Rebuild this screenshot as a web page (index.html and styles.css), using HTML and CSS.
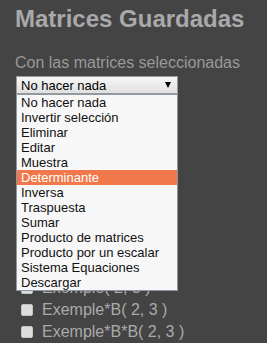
FILE: index.html
```html
<!DOCTYPE html>
<html>
<head>
<meta charset="utf-8">
<link rel="stylesheet" href="styles.css">
</head>
<body>
<h1 class="title">Matrices Guardadas</h1>
<p class="subtitle">Con las matrices seleccionadas</p>
<div class="select-wrap">
  <div class="select">
    <span>No hacer nada</span>
    <span class="arrow"></span>
  </div>
  <ul class="dropdown">
    <li>No hacer nada</li>
    <li>Invertir selección</li>
    <li>Eliminar</li>
    <li>Editar</li>
    <li>Muestra</li>
    <li class="active">Determinante</li>
    <li>Inversa</li>
    <li>Traspuesta</li>
    <li>Sumar</li>
    <li>Producto de matrices</li>
    <li>Producto por un escalar</li>
    <li>Sistema Equaciones</li>
    <li>Descargar</li>
  </ul>
</div>
<ul class="matrices">
  <li><span class="cb"></span>A( 2, 2 )</li>
  <li><span class="cb"></span>B( 2, 3 )</li>
  <li><span class="cb"></span>C( 3, 3 )</li>
  <li><span class="cb"></span>A*B( 2, 3 )</li>
  <li><span class="cb"></span>Identitat( 3, 3 )</li>
  <li><span class="cb"></span>D( 3, 1 )</li>
  <li><span class="cb"></span>Exemple( 2, 2 )</li>
  <li><span class="cb"></span>Exemple( 2, 3 )</li>
  <li><span class="cb"></span>Exemple( 2, 3 )</li>
  <li><span class="cb"></span>Exemple*B( 2, 3 )</li>
  <li><span class="cb"></span>Exemple*B*B( 2, 3 )</li>
</ul>
</body>
</html>
```
FILE: styles.css
```css
html, body {
  margin: 0;
  padding: 0;
  background: #444444;
  height: 100%;
  overflow: hidden;
}
body {
  padding: 0 15px;
  font-family: "Liberation Sans", Arial, sans-serif;
}
.title {
  margin: 6px 0 0 0;
  font-size: 24px;
  font-weight: bold;
  color: #a9a9ab;
  line-height: 26px;
}
.subtitle {
  margin: 22px 0 0 0;
  font-size: 16px;
  line-height: 18px;
  color: #999999;
}
.select-wrap {
  position: relative;
  margin: 4px 0 0 1px;
  width: 162px;
}
.select {
  box-sizing: border-box;
  height: 18px;
  border: 1px solid #9a9a9a;
  background: linear-gradient(#f6f6f6, #e0e0e0);
  display: flex;
  align-items: center;
  justify-content: space-between;
  padding: 0 6px 0 4px;
  font-size: 13px;
  color: #000;
}
.arrow {
  width: 0;
  height: 0;
  border-left: 3.5px solid transparent;
  border-right: 3.5px solid transparent;
  border-top: 6px solid #000;
}
.dropdown {
  position: absolute;
  top: 18px;
  left: 0;
  box-sizing: border-box;
  width: 162px;
  margin: 0;
  padding: 0;
  list-style: none;
  background: #f7f7f7;
  border: 1px solid #8c97a8;
  z-index: 2;
}
.dropdown li {
  height: 15px;
  line-height: 15px;
  font-size: 13px;
  padding-left: 4px;
  color: #111;
  white-space: nowrap;
}
.dropdown li.active {
  background: #f0784a;
  color: #fff;
}
.matrices {
  list-style: none;
  margin: 7px 0 0 0;
  padding: 0 0 0 6px;
}
.matrices li {
  display: flex;
  align-items: center;
  height: 22px;
  font-size: 16px;
  color: #aaaaaa;
  white-space: nowrap;
}
.cb {
  box-sizing: border-box;
  width: 12px;
  height: 12px;
  border-radius: 2px;
  background: #dddddd;
  border: 1px solid #c4c4c4;
  margin-right: 9px;
}
```
